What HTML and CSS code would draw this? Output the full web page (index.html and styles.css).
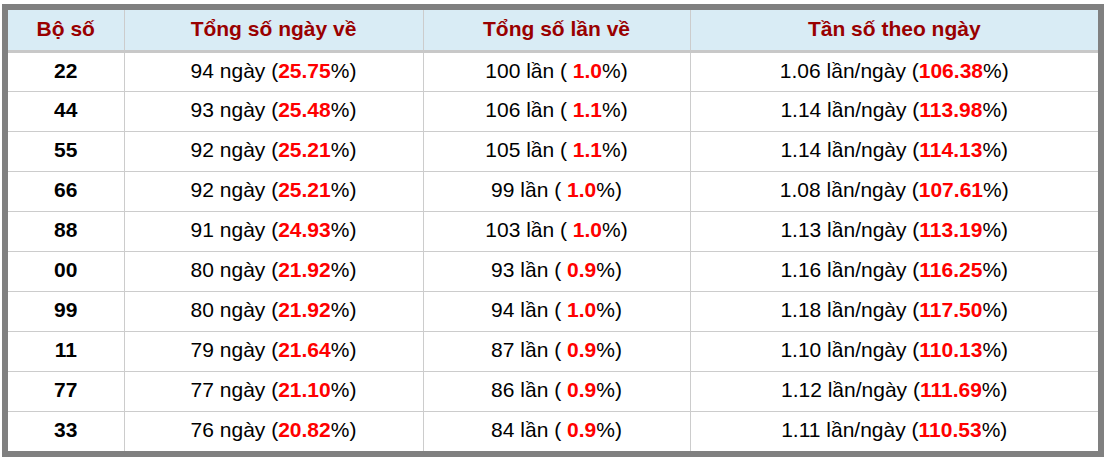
FILE: index.html
```html
<!DOCTYPE html>
<html>
<head>
<meta charset="utf-8">
<link rel="stylesheet" href="styles.css">
</head>
<body>
<div class="frame">
<table class="stats">
<colgroup>
<col class="c1"><col class="c2"><col class="c3"><col class="c4">
</colgroup>
<thead>
<tr><th>Bộ số</th><th>Tổng số ngày về</th><th>Tổng số lần về</th><th>Tần số theo ngày</th></tr>
</thead>
<tbody>
<tr><td class="num">22</td><td>94 ngày (<b>25.75</b>%)</td><td>100 lần ( <b>1.0</b>%)</td><td>1.06 lần/ngày (<b>106.38</b>%)</td></tr>
<tr><td class="num">44</td><td>93 ngày (<b>25.48</b>%)</td><td>106 lần ( <b>1.1</b>%)</td><td>1.14 lần/ngày (<b>113.98</b>%)</td></tr>
<tr><td class="num">55</td><td>92 ngày (<b>25.21</b>%)</td><td>105 lần ( <b>1.1</b>%)</td><td>1.14 lần/ngày (<b>114.13</b>%)</td></tr>
<tr><td class="num">66</td><td>92 ngày (<b>25.21</b>%)</td><td>99 lần ( <b>1.0</b>%)</td><td>1.08 lần/ngày (<b>107.61</b>%)</td></tr>
<tr><td class="num">88</td><td>91 ngày (<b>24.93</b>%)</td><td>103 lần ( <b>1.0</b>%)</td><td>1.13 lần/ngày (<b>113.19</b>%)</td></tr>
<tr><td class="num">00</td><td>80 ngày (<b>21.92</b>%)</td><td>93 lần ( <b>0.9</b>%)</td><td>1.16 lần/ngày (<b>116.25</b>%)</td></tr>
<tr><td class="num">99</td><td>80 ngày (<b>21.92</b>%)</td><td>94 lần ( <b>1.0</b>%)</td><td>1.18 lần/ngày (<b>117.50</b>%)</td></tr>
<tr><td class="num">11</td><td>79 ngày (<b>21.64</b>%)</td><td>87 lần ( <b>0.9</b>%)</td><td>1.10 lần/ngày (<b>110.13</b>%)</td></tr>
<tr><td class="num">77</td><td>77 ngày (<b>21.10</b>%)</td><td>86 lần ( <b>0.9</b>%)</td><td>1.12 lần/ngày (<b>111.69</b>%)</td></tr>
<tr><td class="num">33</td><td>76 ngày (<b>20.82</b>%)</td><td>84 lần ( <b>0.9</b>%)</td><td>1.11 lần/ngày (<b>110.53</b>%)</td></tr>
</tbody>
</table>
</div>
</body>
</html>
```
FILE: styles.css
```css
html, body {
  margin: 0;
  padding: 0;
  background: #fff;
}
body {
  padding: 4px 3px 4px 2px;
  font-family: "Liberation Sans", Arial, sans-serif;
}
.frame {
  width: 1090px;
  border: 6px solid #808080;
}
.stats {
  width: 100%;
  border-collapse: collapse;
  table-layout: fixed;
}
.c1 { width: 116px; }
.c2 { width: 299px; }
.c3 { width: 267px; }
.c4 { width: auto; }
.stats th,
.stats td {
  box-sizing: border-box;
  padding: 0 0 2px;
  font-size: 21px;
  line-height: 24px;
  text-align: center;
  vertical-align: middle;
  border-left: 1px solid #cccccc;
}
.stats th {
  height: 41px;
  background: #d9ecf5;
  color: #990000;
  font-weight: bold;
  border-bottom: 3px solid #c8c8c8;
}
.stats td {
  height: 40px;
  color: #000;
  border-bottom: 1px solid #cccccc;
}
.stats th:first-child, .stats td:first-child { border-left: none; }
.stats tr:last-child td { border-bottom: none; }
.stats td.num { font-weight: bold; }
.stats td b { color: #ff0000; font-weight: bold; }
```
